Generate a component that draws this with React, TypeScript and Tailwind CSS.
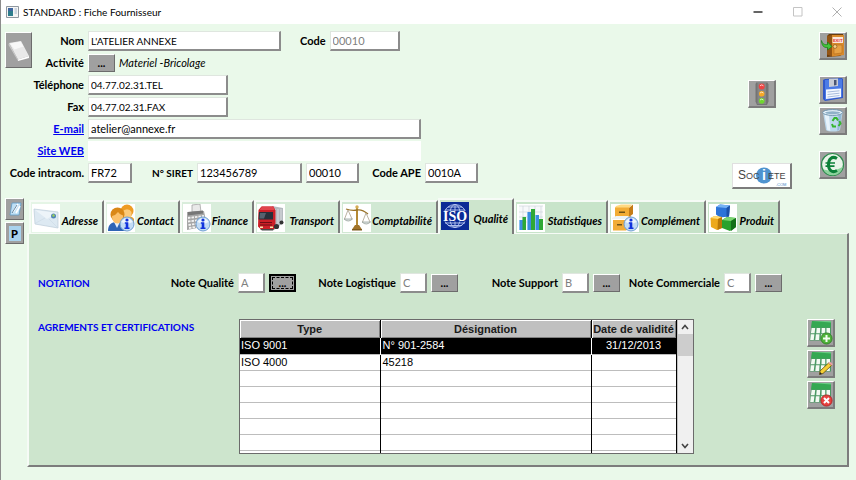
import type { ReactNode } from 'react'
import clsx from 'clsx'

const bevel = 'border border-t-white border-l-white border-r-[#6c6c6c] border-b-[#6c6c6c]'

type FieldProps = { id: string; value: string; className: string; muted?: boolean; small?: boolean; title?: string }

function Field({ id, value, className, muted, small, title }: FieldProps) {
    return (
        <input
            type="text"
            id={id}
            aria-label={title}
            defaultValue={value}
            className={clsx(
                'h-5 bg-white border-t border-l border-r-2 border-b-2 border-t-[#dfe6df] border-l-[#dfe6df] border-r-[#8c8c8c] border-b-[#8c8c8c] pl-[2px] outline-none',
                muted ? 'text-[#808080]' : 'text-black',
                small ? 'text-[10px]' : 'text-[11px]',
                className
            )}
        />
    )
}

function DotsButton({ label, focused }: { label: string; focused?: boolean }) {
    return (
        <button
            type="button"
            aria-label={label}
            className={clsx(
                'w-[27px] h-[18px] bg-[#a0a0a0] text-[11px] font-bold leading-[16px] flex items-center justify-center',
                focused ? 'border-2 border-black p-px' : bevel
            )}
        >
            <span className={clsx(focused && 'w-full h-full flex items-center justify-center border border-dashed border-black')}>
                ...
            </span>
        </button>
    )
}

function IconButton({ label, children }: { label: string; children: ReactNode }) {
    return (
        <button
            type="button"
            aria-label={label}
            className="size-7 shrink-0 bg-[#a0a0a0] border-t border-l border-r-2 border-b-2 border-t-white border-l-white border-r-[#7c7c7c] border-b-[#7c7c7c] flex items-center justify-center"
        >
            {children}
        </button>
    )
}

/* Icones des boutons */
function DoorIcon() {
    return (
        <svg viewBox="0 0 25 25" className="size-[25px]">
            <path d="M7 3l2-2h14v20l-3 2-13 1z" fill="#6b3c0c" />
            <path d="M12 2h12v20l-12 1.500z" fill="#d88a2b" />
            <path d="M7 3l5-1v21.500l-5-2z" fill="#935414" />
            <path d="M14 12h8v8l-8 1z" fill="#e7a245" stroke="#b56d1c" strokeWidth=".6" />
            <path d="M12.500 4h10.500v6H12.500z" fill="#fbe6dc" />
            <text x="13" y="8.800" fontSize="4.500" fontWeight="700" fill="#e03030">EXIT</text>
            <circle cx="15" cy="13.500" r="1.900" fill="#f6cf8a" stroke="#7c4a12" strokeWidth=".6" />
            <path d="M1.500 7.500c1 3.500 3 4.500 6 4V9l4.500 4.500L7.500 17v-2.500C3.500 15 1.500 12 1.500 7.500z" fill="#43c43b" stroke="#177a17" strokeWidth=".7" />
        </svg>
    )
}

function SaveIcon() {
    return (
        <svg viewBox="0 0 25 25" className="size-[25px]">
            <path d="M3 3l2-1 17-1 1 1v19l-18 3-2-2z" fill="#3158c8" />
            <path d="M5 3l17-1v18l-17 3z" fill="#4c7be6" />
            <path d="M9 2l9-.500v7.500L9 10z" fill="#c9cdd6" />
            <path d="M14 3h2.500v5L14 8.500z" fill="#4a5472" />
            <path d="M6 12.500l15-1V20L6 22z" fill="#f4f8ff" />
            <path d="M7.500 15l12-1.200M7.500 17.500l12-1.300M7.500 20l12-1.500" stroke="#9fb4d8" strokeWidth=".9" />
        </svg>
    )
}

function TrashIcon() {
    return (
        <svg viewBox="0 0 25 25" className="size-[25px]">
            <path d="M3 4.500L6 22c2 2 12 2 14 0L22.500 4.500z" fill="#bcd8ec" />
            <path d="M4.500 6l2.800 16 3 .8L9 7z" fill="#e7f3fb" />
            <path d="M18.500 7h3l-2.300 15-2 .8z" fill="#93b9d6" />
            <ellipse cx="12.700" cy="4.500" rx="10" ry="2.900" fill="#e8f3fa" stroke="#6f93ad" />
            <ellipse cx="12.700" cy="4.800" rx="7.700" ry="1.500" fill="#8fb1c8" />
            <path d="M12.500 13l2-3h2l1.500 2.500M19.500 13l1 2.500-2 2.500M16 18.500h-3l-1-2.500" fill="none" stroke="#35b52d" strokeWidth="2" />
        </svg>
    )
}

function EuroIcon() {
    return (
        <svg viewBox="0 0 25 25" className="size-[25px]">
            <circle cx="12.500" cy="12.500" r="11" fill="#e9f4e9" stroke="#2b8a4b" strokeWidth="1.200" />
            <path d="M3 17a10.500 10.500 0 0 0 20-2.500C17 19 8 19.500 3 17z" fill="#8cd39c" />
            <path d="M17 6.500C12 3.500 8.500 7 8.500 12.500s3.500 9 8.500 6" fill="none" stroke="#0c8038" strokeWidth="3" />
            <path d="M5.500 11h9.500M5.500 14.200h9" stroke="#0c8038" strokeWidth="1.700" />
        </svg>
    )
}

function TrafficIcon() {
    return (
        <svg viewBox="0 0 25 25" className="size-[25px]">
            <path d="M7 1.500h11.500l1 2v17l-1.500 3.500H8L6.500 20.500v-17z" fill="#747474" />
            <path d="M8.500 2h8.500v21H8.500z" fill="#868686" />
            <circle cx="12.700" cy="5.500" r="3" fill="#ee4444" />
            <circle cx="12.700" cy="12.700" r="2.800" fill="#f7a823" />
            <circle cx="12.700" cy="19.800" r="2.900" fill="#70d62f" />
            <path d="M11 4.800q1.700-1.800 3.400 0M11 12q1.700-1.800 3.400 0M11 19q1.700-1.800 3.400 0" stroke="#fff" strokeWidth=".9" fill="none" opacity=".8" />
        </svg>
    )
}

function GridIcon({ kind }: { kind: 'add' | 'edit' | 'remove' }) {
    return (
        <svg viewBox="0 0 25 25" className="size-[25px]">
            <path d="M4 1h19v19.500H1.500z" fill="#4c9a64" />
            <path d="M4 1h19l-.300 6.500H3.200z" fill="#35a852" />
            <path d="M4 1h19v1.500z" fill="#6ccb85" />
            <path d="M3.600 8h3.600l-.600 5.300H2.900zM8.700 8h3.500l-.300 5.300H8.200zM13.700 8h3.500v5.300h-3.700zM18.500 8h3.500v5.300h-3.500zM2.800 14.300h3.600l-.700 5.600H2.200zM7.900 14.300h3.600l-.400 5.600H7.300zM13 14.300h3.600v5.600h-3.800zM18.200 14.300h3.600v5.600h-3.600z" fill="#f2faf2" />
            {kind === 'add' && (
                <>
                    <circle cx="18.500" cy="18.500" r="5.600" fill="#4fb33a" stroke="#2a7a20" strokeWidth=".8" />
                    <path d="M18.500 15v7M15 18.500h7" stroke="#f2fff0" strokeWidth="2" />
                </>
            )}
            {kind === 'edit' && (
                <>
                    <path d="M12 20l8.500-8 3 2.500-8.500 8-3.500 1z" fill="#f5cf35" stroke="#5f4b10" strokeWidth=".8" />
                    <path d="M20.500 12l1.500-1.300 3 2.500-1.500 1.300z" fill="#f0a0a0" />
                    <path d="M11.500 23.500l.500-2.500 2 2z" fill="#222" />
                </>
            )}
            {kind === 'remove' && (
                <>
                    <circle cx="18.500" cy="18.500" r="5.600" fill="#e8413f" stroke="#a81e1e" strokeWidth=".8" />
                    <path d="M16 16l5 5M21 16l-5 5" stroke="#fff" strokeWidth="2" />
                </>
            )}
        </svg>
    )
}

/* Icones des onglets */
function InfoBadge() {
    return (
        <>
            <circle cx="20" cy="20" r="7" fill="#c3dcf5" stroke="#6f9fd2" />
            <path d="M14.500 18a6 6 0 0 1 11 0q-5.500 3-11 0z" fill="#eef6fd" />
            <circle cx="20" cy="16" r="1.600" fill="#1133dd" />
            <path d="M17.800 18.300h3.500v5.200h1.200V25h-5v-1.500h1.200v-3.700h-.900z" fill="#1133dd" />
        </>
    )
}

const tabIcons: Record<string, ReactNode> = {
    Adresse: (
        <>
            <path d="M2 5l24 3v16L3 20z" fill="#dde9f2" stroke="#bccbd8" strokeWidth=".7" />
            <path d="M3 6l22 3-10 6z" fill="#edf4f9" />
            <path d="M3 19.500L13 14M25 23l-8-8" stroke="#cbd9e4" strokeWidth=".6" />
            <circle cx="21.500" cy="12" r="2.500" fill="#4f83b8" />
            <path d="M20 11l2-1 1 2-2 1z" fill="#9bcf58" />
        </>
    ),
    Contact: (
        <>
            <path d="M13 13c2-2 12-2 14 2v5H13z" fill="#e8a22c" />
            <circle cx="20" cy="7" r="6.500" fill="#ee9c24" />
            <path d="M15.500 8a5 5 0 0 1 9 0v4q-4 5-9 0z" fill="#fbca7a" />
            <path d="M1 27c0-6 3-9 9-9s8 3 9 9z" fill="#2f64b5" />
            <path d="M7 18h6l-3 6z" fill="#e8f0fa" />
            <circle cx="10.500" cy="10.500" r="7" fill="#d98716" />
            <path d="M5 12q4-1 6-4 2 3 5 3.500c0 5-2 8-5.500 8S5 16 5 12z" fill="#fbc06a" />
            <InfoBadge />
        </>
    ),
    Finance: (
        <>
            <path d="M9 1l8-1 1 8H9z" fill="#e9e9e9" stroke="#999" strokeWidth=".7" />
            <path d="M4 8l17-1 3 15-20 4z" fill="#a6a6a6" />
            <path d="M5 8l15-1.500v3L5 11.500z" fill="#777" />
            <path d="M5 14l16-2M5 17.500l16-2M5.500 21l15-2.500M6 24l12-2" stroke="#f2f2f2" strokeWidth="1.800" strokeDasharray="2.500 1" />
            <InfoBadge />
        </>
    ),
    Transport: (
        <>
            <path d="M15 2l11 2v15l-9 7z" fill="#b5babf" />
            <path d="M18 5v18M21 5v15M24 5v14" stroke="#d9dcdf" />
            <path d="M1.500 6l3-3.500h12l2 4v17l-2 2H4l-3-3z" fill="#cc1f27" />
            <path d="M5 2.500h11.500l1 3.500H2.500z" fill="#e0444c" />
            <path d="M2 8h14v7.500H1.500z" fill="#28303a" />
            <path d="M3 9h6l-2 5.500H2.500z" fill="#56616e" />
            <path d="M3 18.500h12M3 21h12" stroke="#6e0e14" />
            <path d="M3 22.500h3v1.500H3zM13 22.500h3v1.500h-3z" fill="#f6e8b0" />
            <path d="M3 25h14l-1 1.500H5z" fill="#4a4a4a" />
            <circle cx="19.500" cy="22.500" r="2.600" fill="#333" />
            <circle cx="24.500" cy="18.500" r="2" fill="#333" />
        </>
    ),
    Comptabilité: (
        <>
            <path d="M13 3h2v20h-2z" fill="#b58a35" />
            <circle cx="14" cy="3" r="1.700" fill="#d5ad55" />
            <path d="M3 5q6 2 11 1t11 4" fill="none" stroke="#9a7328" strokeWidth="1.300" />
            <path d="M5 6L1.500 15M5 6l4 9M23 9l-3.500 9M23 9l4 9" stroke="#a9a08c" strokeWidth=".8" fill="none" />
            <path d="M1 15h8.500q-4.250 4-8.500 0zM19 18h8.500q-4.250 4-8.500 0z" fill="#e2e8e8" stroke="#8b958f" strokeWidth=".7" />
            <path d="M12 21h4l3 4.500H9z" fill="#a2742a" />
            <path d="M9 25h10v1.500H9z" fill="#7f5a1d" />
        </>
    ),
    Qualité: (
        <>
            <rect width="28" height="28" fill="#0a2a96" />
            <g fill="none" stroke="#b9c8f2" strokeWidth=".9">
                <circle cx="14" cy="14" r="11.500" />
                <ellipse cx="14" cy="14" rx="5.500" ry="11.500" />
                <path d="M14 2.500v23M4 8h20M4 21h20M7 5h14M7 23.500h14" />
            </g>
            <rect x="1" y="9" width="26" height="10.500" fill="#0a2a96" />
            <text x="14" y="19" textAnchor="middle" fontFamily="Liberation Serif, serif" fontWeight="700" fontStyle="normal" fontSize="14" fill="#fff">
                ISO
            </text>
        </>
    ),
    Statistiques: (
        <>
            <path d="M2 2h24v24H2z" fill="#f7f9fb" />
            <path d="M2 2h24M2 8h24M2 13h24M2 18h24M6 2v23M12 2v23M18 2v23M24 2v23" stroke="#cfd5db" strokeWidth=".7" />
            <path d="M2 16h4v10H2zM10 8h4v18h-4zM18 11h4v15h-4z" fill="#3c8ee0" />
            <path d="M5.500 13H9v13H5.500zM14 5h4v21h-4zM22 15h4v11h-4z" fill="#2fa836" />
            <path d="M2 16h1v10H2zM10 8h1v18h-1zM18 11h1v15h-1z" fill="#84bdf3" />
        </>
    ),
    Complément: (
        <>
            <path d="M5 2l5-1.500h11L18 4H4z" fill="#ffd982" />
            <path d="M4 3.500h14V13H4z" fill="#f2ac36" />
            <path d="M18 4l4-3.500V10l-4 3z" fill="#c57c17" />
            <path d="M1 14l4-2h13l-3 3H1z" fill="#eef3f6" />
            <path d="M2 16h13v10.500H2z" fill="#f2ac36" />
            <path d="M15 16l5-4v9l-5 5.500z" fill="#c57c17" />
            <path d="M8 7.500h6V9H8zM6 20h5v1.500H6z" fill="#6d5216" />
            <InfoBadge />
        </>
    ),
    Produit: (
        <>
            <path d="M7 3l4-2.500 10 1-1 11-9 1-4-3z" fill="#2c73d8" />
            <path d="M7 3l4-2.500 10 1L17.500 4z" fill="#76b2f5" />
            <path d="M17.500 4L21 1.500l-1 11-2.500.5z" fill="#1b50a8" />
            <path d="M1.500 14l4-2 7.500 1v11l-5 2-6-3z" fill="#eda91d" />
            <path d="M1.500 14l4-2 7.500 1-4 2z" fill="#ffdc74" />
            <path d="M9 15l4-2v11l-4.500 2z" fill="#b97808" />
            <path d="M13 16l5-3 9 1v9l-6 4-8-3z" fill="#29a12d" />
            <path d="M13 16l5-3 9 1-5 3z" fill="#7cd572" />
            <path d="M22 17l5-3v9l-5 4z" fill="#14701a" />
        </>
    ),
}

const tabs = [
    { name: 'Adresse', style: 'w-[75px] bg-[#e5f5e6]' },
    { name: 'Contact', style: 'w-[76px] bg-[#dff1e0]' },
    { name: 'Finance', style: 'w-[74px] bg-[#d9eddb]' },
    { name: 'Transport', style: 'w-[86px] bg-[#d5ebd7]' },
    { name: 'Comptabilité', style: 'w-[98px] bg-[#d1e8d3]' },
    { name: 'Qualité', style: 'w-[76px] bg-[#cde5cd]' },
    { name: 'Statistiques', style: 'w-[94px] bg-[#c8e4ca]' },
    { name: 'Complément', style: 'w-[98px] bg-[#c6e2c8]' },
    { name: 'Produit', style: 'w-[74px] bg-[#c4e1c6]' },
]

const notes = [
    { name: 'Qualité', value: 'A' },
    { name: 'Logistique', value: 'C' },
    { name: 'Support', value: 'B' },
    { name: 'Commerciale', value: 'C' },
]

const rows = [
    ['ISO 9001', 'N° 901-2584', '31/12/2013'],
    ['ISO 4000', '45218', ''],
    ['', '', ''],
    ['', '', ''],
    ['', '', ''],
    ['', '', ''],
    ['', '', ''],
    ['', '', ''],
]

const rowLabel = 'w-[52px] shrink-0 flex justify-end whitespace-nowrap font-bold'

function TitleBar() {
    return (
        <header className="h-6 bg-white flex items-center pl-[5px]">
            <svg viewBox="0 0 13 12" className="w-[13px] h-3 mr-1">
                <path d="M.5.500h12v11H.5z" fill="#f5f5f5" stroke="#8f979f" />
                <path d="M2 2h5v8H2z" fill="#2e7d8c" />
                <path d="M2 2h5v3H2z" fill="#3f66a0" />
                <path d="M8.500 2h2.500v6H8.500z" fill="#cdd6df" />
            </svg>
            <h1 className="text-[10px]">STANDARD : Fiche Fournisseur</h1>
            <div className="ml-auto flex">
                <button type="button" aria-label="Réduire" className="w-10 h-6 flex items-center justify-center">
                    <svg viewBox="0 0 10 10" className="size-[10px]"><path d="M.5 5h9" stroke="#111" strokeWidth="1.300" /></svg>
                </button>
                <button type="button" aria-label="Agrandir" className="w-10 h-6 flex items-center justify-center">
                    <svg viewBox="0 0 10 10" className="size-[10px]"><path d="M.5.500h8.500v8.500H.5z" fill="none" stroke="#c4c4c4" /></svg>
                </button>
                <button type="button" aria-label="Fermer" className="w-[38px] h-6 flex items-center justify-center">
                    <svg viewBox="0 0 10 10" className="size-[10px]"><path d="M.5.500l9 9M9.500.500l-9 9" stroke="#b0b0b0" /></svg>
                </button>
            </div>
        </header>
    )
}

function SupplierForm() {
    return (
        <form className="flex flex-col">
            <div className="flex">
                <button type="button" aria-label="Gomme" className={clsx('w-[27px] h-9 mt-[2px] bg-[#a0a0a0] flex items-center justify-center', bevel)}>
                    <svg viewBox="0 0 24 32" className="w-6 h-8">
                        <path d="M2 9l12-2 8 15-11 3.500z" fill="#e9e9e9" />
                        <path d="M2 9l9 16.500v1.500L1.500 11z" fill="#c9c9c9" />
                        <path d="M11 25.500l11-3.500v2l-11 3z" fill="#fff" />
                        <path d="M3 9.500l10.500-2 3 5-9 3z" fill="#f8f8f8" />
                    </svg>
                </button>
                <div className="flex flex-col">
                    <div className="h-[22px] flex items-center gap-1">
                        <label htmlFor="nom" className={rowLabel}>Nom</label>
                        <Field id="nom" value="L'ATELIER ANNEXE" small className="w-[193px]" />
                        <label htmlFor="code" className="ml-[15px] font-bold">Code</label>
                        <Field id="code" value="00010" muted className="w-[70px]" />
                    </div>
                    <div className="h-[22px] flex items-center gap-1">
                        <span className={rowLabel}>Activité</span>
                        <DotsButton label="Choisir une activité" />
                        <em>Materiel -Bricolage</em>
                    </div>
                    <div className="h-[22px] flex items-center gap-1">
                        <label htmlFor="telephone" className={rowLabel}>Téléphone</label>
                        <Field id="telephone" value="04.77.02.31.TEL" small className="w-[140px]" />
                    </div>
                    <div className="h-[22px] flex items-center gap-1">
                        <label htmlFor="fax" className={rowLabel}>Fax</label>
                        <Field id="fax" value="04.77.02.31.FAX" small className="w-[140px]" />
                    </div>
                    <div className="h-[22px] flex items-center gap-1">
                        <a href="#email" className={clsx(rowLabel, 'text-[#0000f0] underline')}>E-mail</a>
                        <Field id="email" title="E-mail" value="atelier@annexe.fr" className="w-[333px]" />
                    </div>
                    <div className="h-[22px] flex items-center gap-1">
                        <a href="#site" className={clsx(rowLabel, 'text-[#0000f0] underline')}>Site WEB</a>
                        <input type="text" id="site" aria-label="Site WEB" className="w-[333px] h-5 bg-white pl-[3px] text-[11px] outline-none" />
                    </div>
                </div>
            </div>
            <div className="h-[22px] flex items-center gap-1">
                <label htmlFor="intracom" className="w-[79px] flex justify-end whitespace-nowrap font-bold">Code intracom.</label>
                <Field id="intracom" value="FR72" className="w-11" />
                <label htmlFor="siret" className="w-[57px] flex justify-end whitespace-nowrap font-bold text-[10px]">N° SIRET</label>
                <Field id="siret" value="123456789" className="w-[105px]" />
                <Field id="nic" title="NIC" value="00010" className="w-[53px]" />
                <label htmlFor="ape" className="w-[58px] flex justify-end whitespace-nowrap font-bold">Code APE</label>
                <Field id="ape" value="0010A" className="w-[53px]" />
            </div>
        </form>
    )
}

function CertificationTable() {
    return (
        <div className="flex border border-[#6b6b6b]">
            <div className="h-[133px] overflow-hidden bg-white">
                <table className="table-fixed w-[436px] border-collapse font-['Liberation_Sans',Arial,sans-serif] text-[11px] leading-[15px]">
                    <colgroup>
                        <col className="w-[140px]" />
                        <col className="w-[211px]" />
                        <col className="w-[85px]" />
                    </colgroup>
                    <thead>
                        <tr className="h-[18px] bg-[#c0c0c0]">
                            {['Type', 'Désignation', 'Date de validité'].map((title) => (
                                <th key={title} className="p-0 border-r border-r-black shadow-[inset_1px_1px_0_#fff,inset_-1px_-1px_0_#808080] font-bold text-[#1a1a1a] whitespace-nowrap">
                                    {title}
                                </th>
                            ))}
                        </tr>
                    </thead>
                    <tbody>
                        {rows.map(([type, designation, date], i) => (
                            <tr key={i} className={clsx('h-4 border-b border-b-[#bdbdbd]', i === 0 && 'bg-black text-white')}>
                                <td className={clsx('p-0 pl-px border-r', i === 0 ? 'border-r-white' : 'border-r-black')}>{type}</td>
                                <td className={clsx('p-0 pl-[2px] border-r', i === 0 ? 'border-r-white' : 'border-r-black')}>{designation}</td>
                                <td className="p-0 border-r border-r-black text-center">{date}</td>
                            </tr>
                        ))}
                    </tbody>
                </table>
            </div>
            <div className="w-4 bg-[#f0f0f0] border-l border-l-[#c0c0c0] flex flex-col text-[#444]">
                <button type="button" aria-label="Monter" className="h-[14px] flex items-center justify-center">
                    <svg viewBox="0 0 8 6" className="w-2 h-[6px]"><path d="M1 5l3-3.500L7 5" fill="none" stroke="currentColor" strokeWidth="1.600" /></svg>
                </button>
                <div className="h-[22px] bg-[#cdcdcd]"></div>
                <button type="button" aria-label="Descendre" className="mt-auto h-[14px] flex items-center justify-center">
                    <svg viewBox="0 0 8 6" className="w-2 h-[6px]"><path d="M1 1l3 3.500L7 1" fill="none" stroke="currentColor" strokeWidth="1.600" /></svg>
                </button>
            </div>
        </div>
    )
}

function App() {
    return (
        <div className="min-h-screen flex flex-col bg-[#eaf9ea] border-l border-l-[#8c8c8c] font-[Lato,Carlito,sans-serif] text-[11px] leading-[16px] text-black">
            <TitleBar />

            {/* Fiche */}
            <div className="flex items-start pl-1 pt-[6px] pr-[9px]">
                <SupplierForm />
                <div className="ml-auto w-[60px] flex flex-col items-center gap-[55px] pt-[50px]">
                    <IconButton label="Etat du fournisseur"><TrafficIcon /></IconButton>
                    <button type="button" aria-label="Societe.com" className="w-[60px] h-[26px] bg-white border-t border-l border-r-2 border-b-2 border-t-[#e0e0e0] border-l-[#e0e0e0] border-r-[#7c7c7c] border-b-[#7c7c7c]">
                        <svg viewBox="0 0 57 23" className="w-[57px] h-[23px]" fontFamily="Liberation Sans, sans-serif">
                            <circle cx="31" cy="11.500" r="8" fill="#4f93cf" />
                            <text x="5" y="15" fontSize="12" fill="#444">S</text>
                            <text x="13" y="15" fontSize="9" fill="#444">OC</text>
                            <text x="31" y="16" fontSize="14" fontWeight="700" fill="#fff" textAnchor="middle">i</text>
                            <text x="35" y="15" fontSize="9" fill="#444">ETE</text>
                            <text x="43" y="22" fontSize="4" fill="#3b86c6">.COM</text>
                        </svg>
                    </button>
                </div>
                <div className="ml-[27px] mt-[2px] flex flex-col">
                    <IconButton label="Quitter"><DoorIcon /></IconButton>
                    <div className="my-4 flex flex-col gap-[3px]">
                        <IconButton label="Enregistrer"><SaveIcon /></IconButton>
                        <IconButton label="Supprimer"><TrashIcon /></IconButton>
                    </div>
                    <IconButton label="Comptes"><EuroIcon /></IconButton>
                </div>
            </div>

            {/* Onglets */}
            <div className="flex pl-1 pr-[7px] mt-[9px] pb-[14px]">
                <div className="w-[19px] flex flex-col gap-[2px]">
                    <button type="button" aria-label="Pièces jointes" className={clsx('w-[19px] h-[22px] bg-[#a0a0a0] flex items-center justify-center', bevel)}>
                        <svg viewBox="0 0 14 16" className="w-[14px] h-4">
                            <path d="M4 2h9l-2 12H2z" fill="#bfe0f5" stroke="#5f9cc6" strokeWidth=".8" />
                            <path d="M5 11l5-8M8 12l4-7" stroke="#fff" strokeWidth="1.600" />
                            <path d="M4 12l5-8" stroke="#466a85" strokeWidth=".8" />
                        </svg>
                    </button>
                    <button type="button" className={clsx('w-[19px] h-[22px] bg-[#a0a0a0] flex items-center justify-center', bevel)}>
                        <span className="w-3 h-[15px] bg-[#a9d3ee] text-[11px] leading-[15px] font-black">P</span>
                    </button>
                </div>
                <div className="flex-1 ml-[3px] flex flex-col">
                    <nav className="h-[35px] pl-[2px] flex items-end" role="tablist">
                        {tabs.map((tab) => (
                            <button
                                key={tab.name}
                                type="button"
                                role="tab"
                                aria-selected={tab.name === 'Qualité'}
                                className={clsx(
                                    'relative shrink-0 flex items-center justify-between border-t-2 border-l-2 border-r-2 border-t-[#f6fbf6] border-l-[#f6fbf6] border-r-[#7c7c7c] pl-px pr-1 font-bold italic',
                                    tab.name === 'Qualité' ? 'h-9 -mb-px z-10 pb-[3px]' : 'h-[33px]',
                                    tab.style
                                )}
                            >
                                <svg viewBox="0 0 28 28" className="size-7 shrink-0 bg-white">{tabIcons[tab.name]}</svg>
                                <span className="pt-[6px]">{tab.name}</span>
                            </button>
                        ))}
                    </nav>
                    <section className="bg-[#cde5cd] border-t border-l-2 border-r-2 border-b-2 border-t-[#f6fbf6] border-l-[#f6fbf6] border-r-[#7c7c7c] border-b-[#7c7c7c] pl-[9px] pr-3 pt-[39px] pb-[11px]">
                        {/* Notation */}
                        <div className="flex items-center">
                            <h2 className="w-[96px] font-bold text-[10px] text-[#0000f0]">NOTATION</h2>
                            {notes.map((note, i) => (
                                <div key={note.name} className="w-[162px] flex items-center justify-end gap-1">
                                    <label htmlFor={note.name} className="whitespace-nowrap font-bold">Note {note.name}</label>
                                    <Field id={note.name} value={note.value} muted className="w-[27px]" />
                                    <DotsButton label={'Choisir la note ' + note.name} focused={i === 0} />
                                </div>
                            ))}
                        </div>

                        {/* Agrements */}
                        <div className="mt-[26px] flex items-start">
                            <h2 className="w-[201px] shrink-0 font-bold text-[10px] text-[#0000f0]">AGREMENTS ET CERTIFICATIONS</h2>
                            <CertificationTable />
                            <div className="ml-auto flex flex-col gap-[3px]">
                                <IconButton label="Ajouter"><GridIcon kind="add" /></IconButton>
                                <IconButton label="Modifier"><GridIcon kind="edit" /></IconButton>
                                <IconButton label="Retirer"><GridIcon kind="remove" /></IconButton>
                            </div>
                        </div>
                    </section>
                </div>
            </div>
        </div>
    )
}

export default App
